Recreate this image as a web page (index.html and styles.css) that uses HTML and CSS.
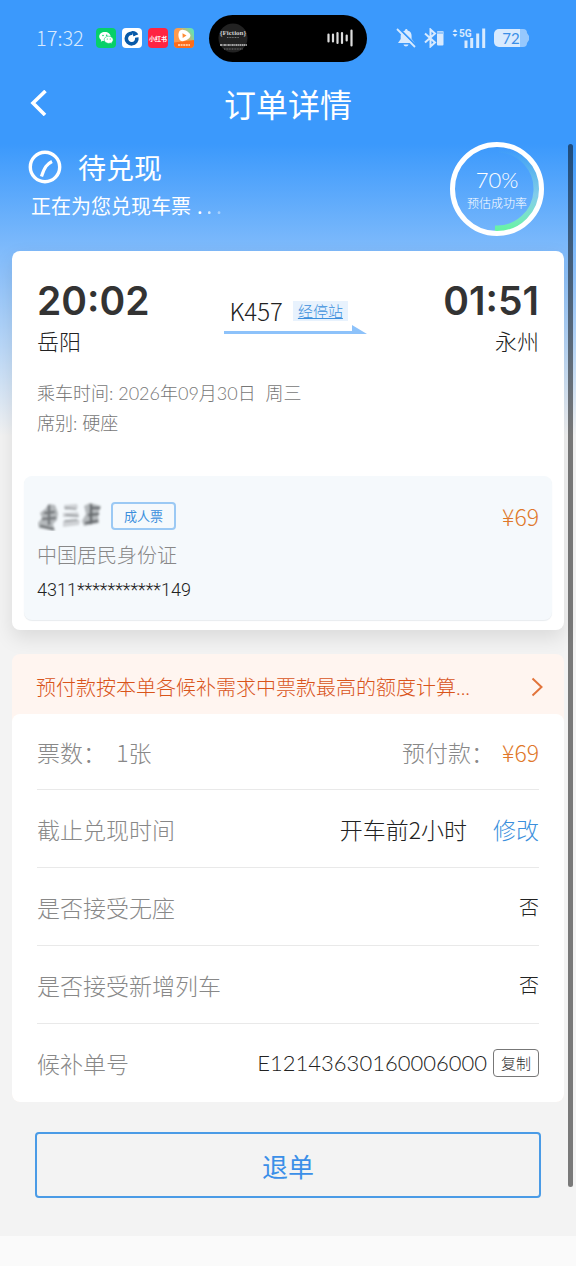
FILE: index.html
```html
<!DOCTYPE html>
<html lang="zh-CN">
<head>
<meta charset="utf-8">
<meta name="viewport" content="width=device-width, initial-scale=1">
<title>订单详情</title>
<link rel="stylesheet" href="styles.css">
</head>
<body>
<div class="screen">
  <div class="statusbar">
    <div class="status-left">
      <span class="clock">17:32</span>
      <svg class="app" viewBox="0 0 20 20" aria-hidden="true"><rect width="20" height="20" rx="4" fill="#07d069"/><path d="M9 4C5.600 4 3.200 6 3.200 8.600c0 1.500.8 2.700 2 3.500l-.4 1.600 2-1c.7.2 1.400.3 2.200.3 3 0 5.600-2 5.600-4.500S12 4 9 4z" fill="#fff"/><path d="M12.700 8.200c-2.600 0-4.500 1.600-4.500 3.600s2 3.600 4.500 3.600c.6 0 1.200-.1 1.700-.3l1.600.8-.3-1.400c.9-.7 1.500-1.600 1.500-2.700 0-2-2-3.600-4.500-3.600z" fill="#fff" stroke="#07d069" stroke-width=".6"/><g fill="#07d069"><circle cx="7" cy="7.500" r=".8"/><circle cx="10.700" cy="7.300" r=".8"/><circle cx="11.300" cy="11" r=".6"/><circle cx="14.200" cy="11" r=".6"/></g></svg>
      <svg class="app" viewBox="0 0 20 20" aria-hidden="true"><rect width="20" height="20" rx="4" fill="#fff"/><path d="M14.800 9.500a5.300 5.300 0 1 1-4.300-4.200" fill="none" stroke="#0759a8" stroke-width="3.600"/><path d="M9.500 3.200c3-.6 5.500.8 6.800 3.300L11.500 8.500z" fill="#0759a8"/><path d="M8 8.800h3.400v3.400H8z" fill="#fff"/><path d="m11.500 9 5.500-2.300" stroke="#fff" stroke-width=".9"/></svg>
      <svg class="app" viewBox="0 0 20 20" aria-hidden="true"><rect width="20" height="20" rx="4" fill="#ff2442"/><text class="app-text" x="10" y="12.500" text-anchor="middle">小红书</text></svg>
      <svg class="app" viewBox="0 0 20 20" aria-hidden="true"><defs><linearGradient id="video" x1="0" y1="0.600" x2="1" y2="0"><stop offset="0.400" stop-color="#ff9a4d"/><stop offset="0.850" stop-color="#6be0ae"/></linearGradient></defs><rect width="20" height="20" rx="4" fill="url(#video)"/><path d="M0 14.500 20 12v4a4 4 0 0 1-4 4H4a4 4 0 0 1-4-4z" fill="#ff6c19"/><path d="M6 2.500c-2.300 2-2 8 .3 10 1.400 1.200 4 .8 6.200-.4 2.700-1.500 4.200-3 3.900-5C15.900 4 9-.1 6 2.500z" fill="#fff"/><path d="m8.500 5.200 4 2.200-3.800 2.600z" fill="#ff8b35"/><path d="M4 17h12" stroke="#ffe2c9" stroke-width="1.500" stroke-dasharray="2 .6"/></svg>
    </div>
    <div class="island">
      <svg class="disc" viewBox="0 0 30 30" aria-hidden="true"><circle cx="15" cy="15" r="14.500" fill="#222"/><path d="M2 22h27" stroke="#ccc" stroke-width="1.600" stroke-dasharray="2 .5 1 .4"/><path d="M6 26h19M9 14.500h12" stroke="#777" stroke-dasharray="1 .6"/><text class="disc-text" x="15" y="11.500" text-anchor="middle">{Fiction}</text></svg>
      <svg class="wave" viewBox="0 0 26 18" aria-hidden="true"><path d="M1.500 5.500v7M6 5.500v7M10.500 4v10M15 4v10M19.700 6.500v5M24.500 1.500v15" stroke="#ddd" stroke-width="2.200" stroke-linecap="round"/></svg>
    </div>
    <div class="status-right">
      <svg width="20" height="20" viewBox="0 0 20 20" aria-hidden="true"><path d="M9 2.500c0-2 2.600-2 2.600 0 3 .7 4 3 4 5.600v2.700l3 4.200H2l2.700-4V7.600C5.200 5 6.500 3 9 2.500zM7.500 16.500h5c-.5 2.500-4.500 2.500-5 0z" fill="#d8eafe"/><path d="M2.500 0 20 17.500" stroke="#3b99fc" stroke-width="2"/><path d="M1 1 19 19" stroke="#d8eafe" stroke-width="1.800"/></svg>
      <svg width="20" height="20" viewBox="0 0 20 20" aria-hidden="true"><path d="m1 5.500 10 9-4.500 4V1.500l4.500 4-10 9" fill="none" stroke="#d8eafe" stroke-width="2"/><rect x="13" y="3" width="6.500" height="14.500" rx="1" fill="#d8eafe"/><path d="M13 3.500h6.500v2.500H13z" fill="#96c8fd"/></svg>
      <svg class="signal" viewBox="0 0 34 20" aria-hidden="true"><path d="M.5 4 3 1l2.500 3zM.5 6 3 9l2.500-3z" fill="#d8eafe"/><text class="signal-text" x="7" y="8.500">5G</text><path d="M14 12.500V20M19.700 10V20M25.700 5.500V20M31.700.5V20" stroke="#d8eafe" stroke-width="3"/></svg>
      <svg class="battery" viewBox="0 0 36 20" aria-hidden="true"><path d="M5 1h24a4 4 0 0 1 4 4l2 3v4l-2 3a4 4 0 0 1-4 4H5z" fill="#96c8fd"/><path d="M5 1h21v18H5a5 5 0 0 1-5-5V6a5 5 0 0 1 5-5z" fill="#d8eafe"/><text class="battery-text" x="17" y="15.500" text-anchor="middle">72</text></svg>
    </div>
  </div>

  <header class="nav">
    <button class="back" type="button" aria-label="返回"><svg width="18" height="26" viewBox="0 0 18 26"><path d="M16.500 1 4 13l12 12" fill="none" stroke="#fff" stroke-width="3.600"/></svg></button>
    <h1 class="title">订单详情</h1>
  </header>

  <section class="progress">
    <div class="progress-text">
      <h2 class="state"><svg width="34" height="34" viewBox="0 0 34 34" aria-hidden="true"><circle cx="17" cy="17" r="14.700" fill="none" stroke="#fff" stroke-width="3.400"/><path d="M24 11.500c-5 2.500-7.500 5.500-10.500 15" fill="none" stroke="#fff" stroke-width="3.200"/></svg>待兑现</h2>
      <p class="state-note">正在为您兑现车票<span class="dots"><span>.</span><span class="dot-mid">.</span><span class="dot-low">.</span></span></p>
    </div>
    <div class="rate">
      <svg class="rate-ring" viewBox="0 0 96 96" aria-hidden="true"><defs><linearGradient id="arc" x1="0" y1="0" x2="0" y2="1"><stop offset="0" stop-color="#75efb5" stop-opacity="0"/><stop offset=".55" stop-color="#9be3df" stop-opacity=".6"/><stop offset="1" stop-color="#67f3a4"/></linearGradient></defs><path d="M48 8.500a39.500 39.500 0 0 1 0 79" transform="rotate(3 48 48)" fill="none" stroke="url(#arc)" stroke-width="6"/><circle cx="48" cy="48" r="44.500" fill="none" stroke="#fff" stroke-width="5"/></svg>
      <strong class="rate-value">70%</strong>
      <span class="rate-label">预估成功率</span>
    </div>
  </section>

  <main>
    <section class="card trip">
      <div class="route">
        <div class="stop"><span class="time">20:02</span><span class="station">岳阳</span></div>
        <div class="train">
          <div class="train-line"><span class="train-no">K457</span><a class="via" href="#">经停站</a></div>
          <svg class="arrow" viewBox="0 0 144 10" aria-hidden="true"><path d="M0 6h128V0l15 9H0z" fill="#8dc2fa"/></svg>
        </div>
        <div class="stop stop-end"><span class="time">01:51</span><span class="station">永州</span></div>
      </div>
      <div class="meta"><p>乘车时间: 2026年09月30日&nbsp; 周三</p><p>席别: 硬座</p></div>
      <div class="passenger">
        <div class="person">
          <svg class="masked" viewBox="0 0 66 30" role="img" aria-label="姓名已隐藏"><defs><filter id="soft"><feGaussianBlur stdDeviation="0.900"/></filter></defs><g filter="url(#soft)"><path d="M12 3 18 4 21 12 20 19 16 23 18 30 2 27 1 22 5 17 3 12 8 8z" fill="#b5b9bc"/><path d="M27 4 40 3 41 7 28 9zM26 12 41 11 42 16 26 16zM26 20 43 19 42 24 26 26z" fill="#cfd2d5"/><path d="M47 5 53 2 64 5 61 13 62 22 47 25 45 20 49 13z" fill="#b5b9bc"/><g fill="none" stroke-linecap="round"><path d="M12 5v18M8 12l9-1M6 18l12-1M4 25l12 3" stroke="#74787b" stroke-width="2.600"/><path d="m28 7 11 1M29 14l12 1M28 20l12-1" stroke="#8f9396" stroke-width="1.600"/><path d="M54 4v18M54 7h8M52 14l9-1M49 22l11-2" stroke="#686c6f" stroke-width="2.600"/></g></g></svg>
          <span class="tag">成人票</span>
          <span class="price">¥69</span>
        </div>
        <p class="id-type">中国居民身份证</p>
        <p class="id-no">4311***********149</p>
      </div>
    </section>

    <section class="card order">
      <button class="notice" type="button"><span class="notice-text">预付款按本单各候补需求中票款最高的额度计算...</span><svg width="12" height="20" viewBox="0 0 12 20" aria-hidden="true"><path d="m1.500 1.500 9 8.500-9 8.500" fill="none" stroke="#e2743b" stroke-width="2"/></svg></button>
      <dl class="rows">
        <div class="row row-first"><dt>票数：&nbsp; 1张</dt><dd class="prepay"><span class="muted">预付款：</span><span class="price">¥69</span></dd></div>
        <div class="row"><dt>截止兑现时间</dt><dd class="spaced">开车前2小时<a class="edit" href="#">修改</a></dd></div>
        <div class="row"><dt>是否接受无座</dt><dd class="short">否</dd></div>
        <div class="row"><dt>是否接受新增列车</dt><dd class="short">否</dd></div>
        <div class="row"><dt>候补单号</dt><dd><span class="order-no">E12143630160006000</span><button class="copy" type="button">复制</button></dd></div>
      </dl>
    </section>

    <button class="refund" type="button">退单</button>
  </main>
  <div class="scroll-thumb"></div>
</div>
</body>
</html>
```
FILE: styles.css
```css
* {
  box-sizing: border-box;
}

body {
  margin: 0;
  background: #fafafa;
  color: #222;
  font-family: "Noto Sans CJK SC", "Noto Sans", sans-serif;
  font-weight: 300;
}

h1, h2, p, dl, dd {
  margin: 0;
  font-weight: inherit;
}

button {
  font: inherit;
  cursor: pointer;
}

svg {
  display: block;
  flex: none;
}

.screen {
  position: relative;
  padding-bottom: 38px;
  background: linear-gradient(#3b99fc 0, #3b99fc 144px, #8cc1fb 270px, #bcd9f8 350px, #f3f3f3 436px);
}

.statusbar {
  display: grid;
  grid-template-columns: 1fr 158px 1fr;
  align-items: center;
  height: 76px;
  color: #d8eafe;
}

.status-left {
  display: flex;
  align-items: center;
  gap: 6px;
  padding-left: 36px;
}

.clock {
  margin-right: 6px;
  font-size: 20px;
  line-height: 24px;
}

.app {
  width: 20px;
  height: 20px;
}

.app-text {
  fill: #fff;
  font-size: 6px;
  font-weight: 700;
}

.island {
  display: flex;
  align-items: center;
  justify-content: space-between;
  height: 47px;
  padding: 0 14px 0 9px;
  border-radius: 24px;
  background: #000;
}

.disc {
  width: 30px;
  height: 30px;
}

.disc-text {
  fill: #ccc;
  font-family: "Liberation Serif", serif;
  font-size: 7px;
  font-weight: 700;
}

.wave {
  width: 26px;
  height: 18px;
}

.status-right {
  display: flex;
  align-items: center;
  gap: 8px;
  padding-left: 29px;
}

.signal {
  width: 34px;
  height: 20px;
}

.signal-text {
  fill: #d8eafe;
  font-family: Roboto, sans-serif;
  font-size: 10px;
  font-weight: 700;
}

.battery {
  width: 36px;
  height: 20px;
}

.battery-text {
  fill: #3b8fe8;
  font-family: Lato, sans-serif;
  font-size: 15px;
  font-weight: 400;
}

.nav {
  display: grid;
  grid-template-columns: 60px 1fr 60px;
  align-items: center;
  height: 54px;
  color: #fff;
}

.back {
  padding: 0 0 0 29px;
  border: 0;
  background: none;
}

.title {
  font-size: 32px;
  line-height: 40px;
  font-weight: 400;
  text-align: center;
}

.progress {
  display: flex;
  align-items: flex-start;
  justify-content: space-between;
  padding: 11px 31px 14px 28px;
  color: #fff;
}

.progress-text {
  padding-top: 6px;
}

.state {
  display: flex;
  align-items: center;
  gap: 16px;
  font-size: 28px;
  line-height: 40px;
  font-weight: 400;
}

.state-note {
  display: flex;
  gap: 6px;
  padding: 4px 0 0 3px;
  font-size: 20px;
  line-height: 30px;
  font-weight: 400;
}

.dots {
  display: flex;
  gap: 4px;
}

.dot-mid {
  opacity: 0.7;
}

.dot-low {
  opacity: 0.4;
}

.rate {
  display: grid;
  align-content: center;
  justify-items: center;
  width: 96px;
  height: 96px;
}

.rate-ring {
  position: absolute;
  width: 96px;
  height: 96px;
}

.rate-value {
  font-family: Lato, sans-serif;
  font-size: 22px;
  line-height: 28px;
  font-weight: 300;
}

.rate-label {
  font-size: 12px;
  line-height: 18px;
}

.card {
  margin: 0 12px;
  border-radius: 8px;
  background: #fff;
}

.trip {
  padding: 26px 12px 10px;
  box-shadow: 0 8px 20px rgba(0, 0, 0, 0.1);
}

.route {
  display: flex;
  justify-content: space-between;
  padding: 0 13px;
}

.stop {
  display: flex;
  flex-direction: column;
}

.stop-end {
  align-items: flex-end;
}

.time {
  color: #333;
  font-family: Inter, sans-serif;
  font-size: 39px;
  line-height: 47px;
  font-weight: 600;
}

.station {
  font-size: 22px;
  line-height: 32px;
}

.train {
  padding-top: 20px;
}

.train-line {
  display: flex;
  align-items: center;
  gap: 10px;
  padding-left: 5px;
}

.train-no {
  font-size: 24px;
  line-height: 28px;
}

.via {
  padding: 0 5px;
  background: #e8f2fd;
  color: #3b8fdc;
  font-size: 15px;
  line-height: 20px;
}

.arrow {
  width: 144px;
  height: 10px;
}

.meta {
  padding: 22px 13px 38px;
  color: #777;
  font-family: Lato, "Noto Sans CJK SC", sans-serif;
  font-size: 18px;
  line-height: 30px;
}

.passenger {
  padding: 24px 13px 18px;
  border-radius: 8px;
  background: #f5f9fc;
  box-shadow: 0 1px 1px #e8ecef;
}

.person {
  display: flex;
  align-items: center;
  gap: 8px;
}

.masked {
  width: 66px;
  height: 30px;
}

.tag {
  padding: 0 11px;
  border: 2px solid #9bc9f4;
  border-radius: 4px;
  color: #3b8fdc;
  font-size: 13px;
  line-height: 24px;
  font-weight: 400;
}

.price {
  color: #e0782a;
  font-size: 23px;
  line-height: 32px;
}

.person .price {
  margin-left: auto;
}

.id-type {
  color: #888;
  font-size: 20px;
  line-height: 46px;
}

.id-no {
  font-family: Roboto, sans-serif;
  font-size: 18px;
  line-height: 24px;
}

.order {
  margin-top: 24px;
  overflow: hidden;
  background: #fff5f0;
}

.notice {
  display: flex;
  align-items: center;
  justify-content: space-between;
  width: 100%;
  height: 60px;
  padding: 6px 21px 0 24px;
  border: 0;
  background: none;
  color: #d9541a;
  text-align: left;
}

.notice-text {
  font-family: Lato, "Noto Sans CJK SC", sans-serif;
  font-size: 20px;
  line-height: 32px;
}

.rows {
  padding: 0 25px;
  border-radius: 8px;
  background: #fff;
}

.row {
  display: flex;
  align-items: center;
  justify-content: space-between;
  height: 78px;
  border-bottom: 1px solid #e9e9e9;
  font-size: 23px;
  line-height: 32px;
}

.row-first {
  height: 76px;
}

.row:last-child {
  border-bottom: 0;
}

.row dt,
.muted {
  color: #888;
}

.row dd {
  display: flex;
  align-items: center;
}

.row .prepay {
  gap: 8px;
}

.row .spaced {
  gap: 26px;
}

.row .short {
  font-size: 20px;
}

.order-no {
  font-family: Lato, sans-serif;
  font-size: 22px;
}

.edit {
  color: #3b8fdc;
  text-decoration: none;
}

.copy {
  margin-left: 6px;
  padding: 0 7px;
  border: 1px solid #777;
  border-radius: 4px;
  background: #fff;
  color: #333;
  font-size: 15px;
  line-height: 26px;
}

.refund {
  display: block;
  width: calc(100% - 70px);
  height: 66px;
  margin: 30px 35px 0;
  border: 2px solid #4a9be6;
  border-radius: 4px;
  background: none;
  color: #3b8fe8;
  font-size: 26px;
  font-weight: 400;
}

.scroll-thumb {
  position: absolute;
  top: 144px;
  right: 3px;
  bottom: 49px;
  width: 5px;
  border-radius: 3px;
  background: rgba(0, 0, 0, 0.5);
}
```
